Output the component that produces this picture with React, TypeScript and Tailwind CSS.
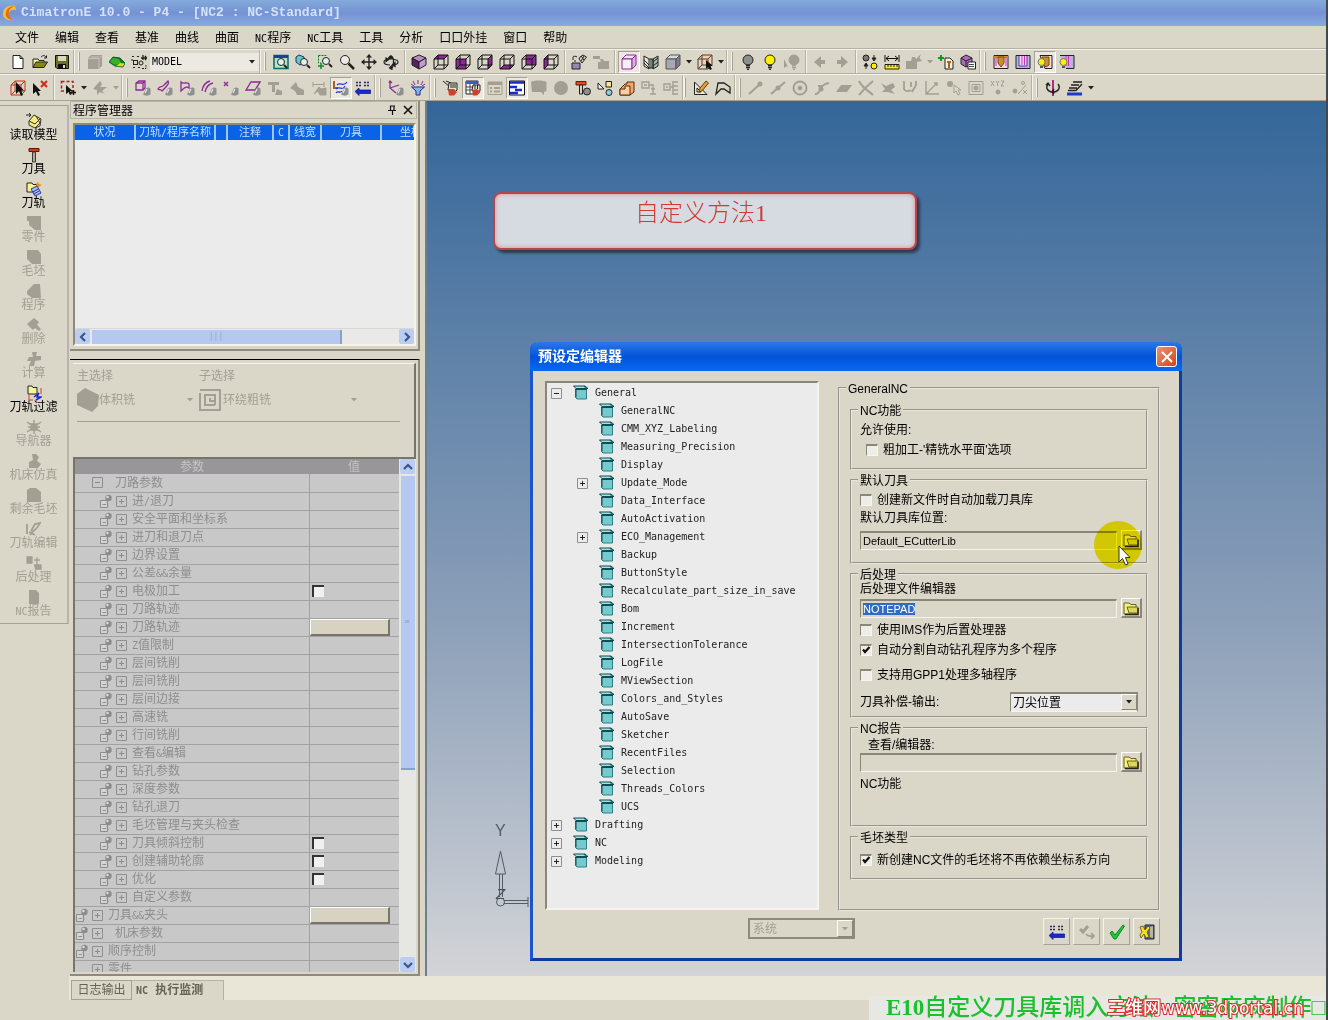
import { ReactNode, useEffect, useRef } from 'react';
import clsx from 'clsx';

const G = '#a39f92';
const P = '#8b2a96';

/** Latin runs are set in a narrow monospace next to the 12px Chinese glyphs */
function Mixed({ children }: { children: string }) {
  return (
    <>
      {children.split(/([A-Za-z&/]+)/).map((part, i) =>
        i % 2 ? (
          <span key={i} className="text-[10px]">
            {part}
          </span>
        ) : (
          part
        ),
      )}
    </>
  );
}

const FACES = {
  top: '1,5 5,1 15,1 11,5',
  front: '1,5 11,5 11,15 1,15',
  right: '11,5 15,1 15,11 11,15',
  bottom: '1,15 5,11 15,11 11,15',
  back: '5,1 15,1 15,11 5,11',
  left: '1,5 5,1 5,11 1,15',
};

function wireCube(face?: keyof typeof FACES, stroke = '#111', fill = P) {
  return (
    <>
      {face && <polygon points={FACES[face]} fill={fill} />}
      <path d="M1 5H11V15H1ZM5 1H15V11H5ZM1 5L5 1M11 5L15 1M11 15L15 11M1 15L5 11" stroke={stroke} fill="none" />
    </>
  );
}

function solidCube(a: string, b: string, c: string, stroke = '#333') {
  return (
    <g stroke={stroke} strokeLinejoin="round">
      <polygon points="1,5 5,1 15,1 11,5" fill={a} />
      <polygon points="1,5 11,5 11,15 1,15" fill={b} />
      <polygon points="11,5 15,1 15,11 11,15" fill={c} />
    </g>
  );
}

function lens(x = 9, y = 8) {
  return (
    <g fill="none" stroke="#222">
      <circle cx={x} cy={y} r="3.5" fill="#dff0ee" />
      <path d={`M${x + 3} ${y + 3}L${x + 6} ${y + 6}`} strokeWidth="2" />
    </g>
  );
}

function bulb(fill: string, stroke = '#222') {
  return (
    <g stroke={stroke}>
      <circle cx="8" cy="6" r="5" fill={fill} />
      <path d="M6 11.5H10M6 13.5H10M7 15.5H9" strokeWidth="1.5" />
    </g>
  );
}

// small grey cone that sits in the corner of the filter icons
const cone = (
  <>
    <path d="M8 14.500L11 8.500C12 7 15 7 15.500 9V14.500C13 16 10 16 8 14.500Z" fill="#8f8f8f" />
    <path d="M10 13L12 9" stroke="#e4e4e4" strokeWidth="1.200" />
  </>
);
const cursor = <path d="M6 2V14L9 11L11 16L13 15L11 10.500H14Z" fill="#111" />;

function filterIcon(shape: ReactNode) {
  return (
    <>
      <g fill="none" stroke={P} strokeWidth="1.300">
        {shape}
      </g>
      {cone}
    </>
  );
}

const ICONS: Record<string, ReactNode> = {
  new: <path d="M3 1.500H10L13 4.500V14.500H3ZM10 1.500V4.500H13" fill="#fff" stroke="#222" />,
  open: (
    <g stroke="#222">
      <path d="M1 13.500V5H6L7 6.500H12V8" fill="#f5f0a0" />
      <path d="M1 13.500L4 8H15.500L12 13.500Z" fill="#8a8418" />
      <path d="M9 3C11 1 13 1 14 3.500M14.500 1.500V4H12" fill="none" />
    </g>
  ),
  save: (
    <>
      <path d="M1.500 1.500H14.500V14.500H3L1.500 13Z" fill="#6e6e1e" stroke="#111" />
      <path d="M4 2H12V7H4Z" fill="#dad6c8" />
      <path d="M4 10H12V14H4Z" fill="#111" />
      <path d="M9 11H11V14H9Z" fill="#ddd" />
    </>
  ),
  grayBox: (
    <>
      <path d="M1 4L4 1H15V12L12 15H1Z" fill={G} />
      <path d="M1 4.500H12V15M12 4.500L15 1.500M4 3H12" fill="none" stroke="#c9c5b8" />
    </>
  ),
  greenGem: (
    <>
      <path d="M0 8L4 3L11 4L16 9L14 13L6 12Z" fill="#0c7a1e" stroke="#063" />
      <path d="M1 8L4 4L10 5L12 9L6 11Z" fill="#3cae28" />
      <path d="M11 9L15.500 9.500L14 12.500L7 12Z" fill="#e8d030" />
    </>
  ),
  nodes: (
    <g fill="none" stroke="#222">
      <path d="M1 2.500H4M6 2.500H8M1 5V7M2 13.500H5M7 13.500H9M11 14.500H15V11" strokeDasharray="2 1" />
      <rect x="2.500" y="6.500" width="4" height="4" />
      <circle cx="10" cy="9" r="2" />
      <path d="M12 1V6M10 4H15M14 2L15.500 4L14 6" strokeWidth="1.300" />
    </g>
  ),
  zoomWin: (
    <>
      <path d="M1 1.500H15V14.500H1Z" fill="#b7e2c4" stroke="#0a6a6a" strokeWidth="1.500" />
      <path d="M1 1H15V4H1Z" fill="#1c3f9c" />
      {lens(8, 8)}
    </>
  ),
  zoomCube: (
    <>
      <path d="M1 3L4 1L9 3V9L5 11L1 8Z" fill="#6ac8b4" stroke="#1c2f8c" />
      {lens(9, 8)}
    </>
  ),
  zoomPlus: (
    <>
      <path d="M1.500 1.500H9V3M1.500 1.500V9H4" fill="none" stroke="#0a7a2a" strokeDasharray="2 1" />
      <path d="M1 12H7M4 9V15" stroke="#0a8a2a" strokeWidth="1.500" />
      {lens(9, 7)}
    </>
  ),
  zoom: (
    <g stroke="#222" fill="none">
      <circle cx="6" cy="6" r="4.500" fill="#eceae2" />
      <path d="M9.500 9.500L15 15" strokeWidth="2.500" />
    </g>
  ),
  pan: (
    <g fill="#222">
      <path d="M7.300 3H8.700V13H7.300ZM3 7.300H13V8.700H3Z" />
      <path d="M8 0L11 3.500H5ZM8 16L11 12.500H5ZM0 8L3.500 5V11ZM16 8L12.500 5V11Z" />
    </g>
  ),
  rotate: (
    <g fill="none" stroke="#222" strokeWidth="1.200">
      <path d="M6 5.500C2 5.500 1 7 1 8C1 10 4 11 7 11M10 5.500C14 5.500 15 7 15 8C15 9 14 10.500 11 10.500" />
      <path d="M5.500 6C5.500 3 6.500 2 8 2C9.500 2 10.500 4 10.500 8C10.500 12 9.500 14 8 14" />
      <path d="M5 5L8 2L10 5ZM12 8.500L9.500 10.500L12 12.500ZM9 11.500L6.500 14L9 15.500ZM3 4L5.500 5.500L3 7.500Z" fill="#222" />
    </g>
  ),
  iso: (
    <g stroke="#222" strokeLinejoin="round">
      <polygon points="8,1 15,4 8,8 1,4" fill="#b98cc4" />
      <polygon points="1,4 8,8 8,15 1,11" fill="#5a1f66" />
      <polygon points="15,4 8,8 8,15 15,11" fill="#c69ad0" />
    </g>
  ),
  cubeTop: wireCube('top'),
  cubeFront: wireCube('front'),
  cubeRight: wireCube('right'),
  cubeBottom: wireCube('bottom'),
  cubeBack: wireCube('back'),
  cubeLeft: wireCube('left'),
  link: (
    <>
      <path d="M1 9H9V15H1Z" fill="#9a86b8" stroke="#222" />
      <path d="M2 3C2 2 5 2 6 3M2 3V6M3 7H5M9 3L12 1L15.500 3L11 9L8 5ZM10 2L13 6M13 2L10 7" fill="none" stroke="#222" />
    </>
  ),
  grayLink: <path d="M0 2H7V5H10L11 7H16V15H5V8H8L7 5H0Z" fill={G} />,
  shaded: solidCube('#f2e6f4', '#f6f0f6', '#d9b0e0', P),
  hatch: (
    <g stroke="#222">
      <path d="M1 2L6 5V15L1 12Z" fill="#dfe8e0" />
      <path d="M15 2L10 5V15L15 12Z" fill="#9dc4a8" />
      <path d="M1 6L6 11M1 9L6 14M10 8L15 4M10 12L15 8M6 5H10V14H6M8 5V14" fill="none" />
    </g>
  ),
  grayCube: solidCube('#d8d8de', '#a8a8b2', '#7c7c88', '#555'),
  cubeSel: (
    <>
      {wireCube('back', '#5a3a2a', '#f0cfae')}
      <path d="M9 6V15L11 13L13 16L15 15L13 12H16Z" fill="#111" />
    </>
  ),
  bulbGray: bulb('#8e8e8e'),
  bulbYellow: bulb('#fdf000'),
  bulbOff: (
    <>
      <g transform="translate(2 0)">{bulb(G, G)}</g>
      <path d="M0 5V14L3 12L5 15" fill={G} />
    </>
  ),
  left: <path d="M9 2V14L2 8ZM9 6H13V10H9Z" fill={G} />,
  right: <path d="M7 2V14L14 8ZM3 6H7V10H3Z" fill={G} />,
  swap: (
    <g stroke="#222">
      <circle cx="4" cy="4" r="3" fill="#777" />
      <circle cx="12" cy="12" r="3" fill="#fdf000" />
      <path d="M12 1V5M10 4L12 7L14 4ZM4 15V11M2 12L4 9L6 12Z" fill="#222" />
    </g>
  ),
  measure: (
    <>
      <path d="M1 1V8M15 1V8M2 4.500H14M5 2L2 4.500L5 7M11 2L14 4.500L11 7" stroke="#111" fill="none" />
      <path d="M1 10.500H15V15H1Z" fill="#fdf000" stroke="#222" />
      <path d="M4 11V13M7 11V13M10 11V13M13 11V13" stroke="#222" />
    </>
  ),
  grayStar: <path d="M0 7H5L6 3H9L10 5L15 0L13.500 4L16 7L11 8V15H0Z" fill={G} />,
  treePlus: (
    <>
      <path d="M7 4H12L15 7V15H7Z" fill="#f4f0dc" stroke="#222" />
      <path d="M0 4H6M3 1V7" stroke="#0a9a2a" strokeWidth="2" />
      <path d="M9 8H13M11 8V14" stroke="#b0601a" strokeWidth="2" />
    </>
  ),
  cubeList: (
    <>
      <polygon points="6,1 12,4 12,10 6,13 1,10 1,4" fill="#b06ac0" stroke="#222" />
      <path d="M1 4L6 7L12 4M6 7V13" stroke="#222" fill="none" />
      <path d="M8 8H15.500V15H8Z" fill="#fff" stroke="#222" />
      <path d="M9 10.500H14M9 12.500H14" stroke="#444" />
    </>
  ),
  nc1: (
    <>
      <path d="M1 1.500H15V14.500H1Z" fill="#f4d8e8" stroke="#222" />
      <path d="M1 3H15" stroke="#c8902a" strokeWidth="2" />
      <path d="M3 3V12M13 3V12" stroke="#d030b0" />
      <path d="M5 3H11V9L8 13L5 9Z" fill="#c8902a" stroke="#7a4a10" />
    </>
  ),
  nc2: (
    <>
      <path d="M1 1.500H15V14.500H1Z" fill="#b8b4e0" stroke="#222" />
      <path d="M4 2V12H12V2" fill="#f4d8f0" stroke="#4040b0" />
      <path d="M7 2V11M9.500 2V11" stroke="#d030b0" />
    </>
  ),
  nc3: (
    <>
      <path d="M3 1.500H15V14.500H8Z" fill="#f4d8e8" stroke="#222" />
      <path d="M5 3H12V11L9 13L6 10Z" fill="#c8902a" stroke="#7a4a10" />
      <circle cx="4.500" cy="8" r="3.500" fill="#fdf000" stroke="#777" />
      <path d="M3 13H6" stroke="#555" strokeWidth="2" />
    </>
  ),
  nc4: (
    <>
      <path d="M1 1.500H15V14.500H7" fill="#b8b4e0" stroke="#222" />
      <path d="M7 2V12M9.500 2V12" stroke="#d030b0" />
      <circle cx="4.500" cy="8" r="3.500" fill="#fdf000" stroke="#777" />
      <path d="M3 13H6" stroke="#555" strokeWidth="2" />
    </>
  ),
  selRed: (
    <>
      {wireCube(undefined, '#d42a1c')}
      {cursor}
    </>
  ),
  cursorX: (
    <>
      <path d="M1 3V14L4 11.500L6 16L8 15L6 11H9Z" fill="#111" />
      <path d="M9 1L15 7M15 1L9 7" stroke="#d42a1c" strokeWidth="2" />
    </>
  ),
  selDash: (
    <>
      <path d="M1.500 1.500H13V11H1.500Z" fill="none" stroke="#b0202a" strokeWidth="1.500" strokeDasharray="3 2" />
      <path d="M6 5V14L8.500 12L10 15L12 14L10 11H12.500Z" fill="#111" />
      <path d="M11 12.500H16M13.500 10V15" stroke="#111" strokeWidth="1.500" />
    </>
  ),
  grayHand: <path d="M1 9L8 1L10 4L8 7H15L10 11L13 14L8 12L5 15V10Z" fill={G} />,
  f1: filterIcon(<path d="M1 3L4 1H10V8L8 10H1ZM1 3H8V10M8 3L10 1" />),
  f2: filterIcon(<path d="M1 9C3 5 5 8 7 5L11 1C13 4 10 5 8 8L5 11C3 8 2 11 1 9Z" />),
  f3: filterIcon(<path d="M2 11V2C5 5 8 1 10 4V8C7 6 5 8 2 11Z" />),
  f4: filterIcon(<path d="M1 11C2 5 5 2 9 1M4 12C5 7 8 4 12 3" />),
  f5: filterIcon(<path d="M1 2L5 6M5 2L1 6" />),
  f6: filterIcon(<path d="M1 10L6 2H15L10 10Z" />),
  g7: <path d="M1 2H12V5H8V12H5V5H1ZM10 9L15 11V15H8Z" fill={G} />,
  g8: <path d="M1 8L7 2L9 7L15 10V15H8L6 11Z" fill={G} />,
  g9: <path d="M2 2V7M13 2V7M2 4.500H13M3 14L8 7L10 9L15 8V15H9L7 11Z" fill={G} stroke={G} />,
  path: (
    <>
      <path d="M1 1V8H5" stroke="#b0601a" strokeWidth="2" fill="none" />
      <path d="M4 5C8 1 10 8 14 2M3 9C7 5 9 12 12 6M3 13C5 10 7 14 9 11" fill="none" stroke="#2a3ad0" strokeWidth="1.300" />
      {cone}
    </>
  ),
  listBack: (
    <>
      <path d="M1 2.500H6M1 5.500H6M9 2.500H15M9 5.500H15" stroke="#2a2a6a" strokeWidth="1.500" strokeDasharray="2 1" />
      <path d="M0 11.500L4 8V10H15.500V13.500H4V15.500Z" fill="#1a2ad0" stroke="#0a1080" strokeWidth="0.700" />
    </>
  ),
  axis: filterIcon(<path d="M2 1V8L8 13M2 8L11 5M1 3L2 1L4 3" />),
  funnel: (
    <>
      <path d="M3 1L5 5M8 0V4M13 1L11 5M1 4L4 6M15 4L12 6" stroke={P} />
      <path d="M1.500 7H14.500L10 11V15H6V11Z" fill="#8ab0e8" stroke="#1c2f8c" />
    </>
  ),
  hand: (
    <>
      <path d="M0 1L7 7M3 1L8 3" stroke="#222" />
      <path d="M6 3H14V10L10 14L5 10Z" fill="#e8e0d4" stroke="#222" />
      <path d="M5 9L11 9L14 12L11 15.500H6Z" fill="#c8442a" />
      <path d="M8 4V8M10 4V8M12 4V8" stroke="#222" />
    </>
  ),
  gridHand: (
    <>
      <path d="M1 1H13V14H1Z" fill="#fff" stroke="#222" />
      <path d="M1 1H13V4H1Z" fill="#3a5ad0" />
      <path d="M1 7H13M1 10H13M5 4V14M9 4V14" stroke="#444" />
      <path d="M8 5H15V11L11 13L7 10Z" fill="#e8e0d4" stroke="#222" />
      <path d="M7 10L12 9L15.500 12L12 15.500H8Z" fill="#c8442a" />
      <path d="M10 5V9M12.500 5V9" stroke="#222" />
    </>
  ),
  grayList: (
    <g fill="none" stroke={G}>
      <path d="M1 2H15V14.500H1Z" />
      <path d="M1 3.500H15" strokeWidth="3" />
      <path d="M3 8H5M7 8H13M3 11.500H5M7 11.500H13" strokeWidth="2" />
    </g>
  ),
  blueList: (
    <>
      <path d="M0.500 1H15.500V15H0.500Z" fill="#fff" stroke="#111" />
      <path d="M1 2.500H15M1 7H8M6 10H13M1 13H9" stroke="#1a2ad0" strokeWidth="2.500" />
    </>
  ),
  speech: <path d="M0 2C3 0 12 0 15.500 2V11L13 12V15L10 12H1Z" fill={G} />,
  disc: <circle cx="8" cy="8" r="7" fill={G} />,
  tool: (
    <>
      <path d="M1 1.500H11V5H1Z" fill="#e0482a" stroke="#6a1a10" />
      <path d="M4.500 5H7.500V14H4.500Z" fill="#d8d4c4" stroke="#222" />
      <circle cx="12" cy="11.500" r="3.500" fill="#8e8e8e" stroke="#222" />
    </>
  ),
  shapes: (
    <g stroke="#222">
      <path d="M1 3L7 9H1Z" fill="#f4f0e0" />
      <path d="M9 1.500H14.500V7H9Z" fill="#f8e890" />
      <circle cx="12" cy="12.500" r="3" fill="#8ad0d8" />
    </g>
  ),
  block: (
    <g stroke="#5a2a10">
      <path d="M1 9L6 4H8V2H15V12L11 15H1Z" fill="#f4a868" />
      <path d="M1 9H6V6H11V15H1Z" fill="#f8cfa4" />
    </g>
  ),
  grayTree: <path d="M1 2H8V8H1ZM3 5H6M8 5H12V14M9 14H15M10 9H14" fill="none" stroke={G} strokeWidth="1.400" />,
  grayTree2: <path d="M1 4H7V10H1ZM3 7H5M7 7H10M10 1V15M10 2H15M10 6H15M10 10H15M10 14H15" fill="none" stroke={G} strokeWidth="1.400" />,
  pencil: (
    <>
      <path d="M1.500 2V14.500H14ZM4 8V12H8Z" fill="#e9e6d8" stroke="#222" />
      <path d="M6 12L7 8L13 1L15.500 3L9 11Z" fill="#e0a030" stroke="#6a3a10" />
    </>
  ),
  poly: <path d="M1 14L3 3H9L15 7V13L9 9L6 9Z" fill="none" stroke="#222" strokeWidth="1.300" />,
  d1: (
    <>
      <path d="M1 14L11 5" stroke={G} strokeWidth="2" />
      <circle cx="12" cy="4" r="2.500" fill={G} />
    </>
  ),
  d2: (
    <>
      <path d="M1 14L15 2" stroke={G} strokeWidth="2" />
      <circle cx="8" cy="8" r="2.500" fill={G} />
    </>
  ),
  d3: (
    <g stroke={G}>
      <circle cx="8" cy="8" r="6.500" fill="none" strokeWidth="2" />
      <circle cx="8" cy="8" r="2" fill={G} />
    </g>
  ),
  d4: (
    <>
      <path d="M1 14C8 15 4 4 15 3M4 6H8" fill="none" stroke={G} strokeWidth="2" />
      <circle cx="7" cy="9" r="2.500" fill={G} />
    </>
  ),
  d5: <path d="M0 12L5 5H16L11 12Z" fill={G} />,
  d6: <path d="M1 1C5 9 10 10 15 15M15 1C10 5 5 10 1 15" fill="none" stroke={G} strokeWidth="2" />,
  d7: <path d="M1 3L6 6L13 3L15 7L11 10L15 14L8 12L2 12L5 9Z" fill={G} />,
  d8: <path d="M2 1V9C4 14 8 9 9 11M9 2V7M14 1V5L10 12" fill="none" stroke={G} strokeWidth="1.800" />,
  d9: <path d="M2 1V14H15M2 14L13 3M10 3H13V6" fill="none" stroke={G} strokeWidth="1.400" />,
  d10: (
    <>
      <circle cx="4" cy="4" r="3" fill={G} />
      <path d="M8 5V13L10 11L12 15L14 14L12 10H15Z" fill="none" stroke={G} />
    </>
  ),
  d11: (
    <g stroke={G} fill="none">
      <path d="M1 1.500H15V14.500H1Z" />
      <path d="M4 4.500H12V11.500H4Z" />
      <circle cx="8" cy="8" r="2" fill={G} />
    </g>
  ),
  d12: (
    <g stroke={G} fill="none">
      <path d="M1 1L4 6M4 1L1 6M6 1L7.500 3.500L9 1M7.500 3.500V6M11 1H14L11 6H14" />
      <circle cx="8" cy="12" r="2" fill={G} />
    </g>
  ),
  d13: (
    <g stroke={G} fill="none">
      <circle cx="3" cy="11" r="2" fill={G} />
      <circle cx="11" cy="3" r="1.500" />
      <path d="M6 14L14 5M11 10L15 14M15 10L11 14" />
    </g>
  ),
  spin: (
    <>
      <path d="M8 0V16" stroke="#b02a8c" strokeWidth="2" />
      <path d="M3 4C0 8 3 12 8 12C13 12 16 8 13 4M1 5L3 3L5 6M9 9L7 12L9 14" fill="none" stroke="#222" strokeWidth="1.400" />
    </>
  ),
  layers: (
    <>
      <path d="M6 2H15M4 5H12M2 8H10M1 10.500H9L15 4" fill="none" stroke="#222" strokeWidth="1.300" />
      <path d="M0 12.500H15V15.500H0Z" fill="#1a3ad0" />
    </>
  ),
  // side bar
  load: (
    <>
      <path d="M3 8L8 2L15 6L14 13L9 15L3 12Z" fill="#f4ee7a" stroke="#333" />
      <path d="M10 3L14 10L9 15M3 8L9 11L14 6" stroke="#333" fill="none" />
      <path d="M0 2H4M3 0L5 2L3 4" stroke="#222" fill="none" />
    </>
  ),
  cutter: (
    <>
      <path d="M3 1.500H13V4.500H3Z" fill="#d83a1c" stroke="#5a1a10" />
      <path d="M6.500 5H9.500V15H6.500Z" fill="#b8a890" stroke="#3a3a3a" />
    </>
  ),
  toolpath: (
    <>
      <path d="M1 2H6L7 3.500H11V11H1Z" fill="#f8f49a" stroke="#222" />
      <path d="M5 8L11 5L15 12L9 15Z" fill="#a8b8f0" stroke="#223a9c" />
      <path d="M7 11L12 8M8 13L13 10" stroke="#223a9c" />
      <path d="M10 3L12 1L13 3L16 4L13 6L11 5Z" fill="#f0901a" />
    </>
  ),
  b1: <path d="M1 1H15V15H9L3 10V6H1Z" fill={G} />,
  b2: <path d="M1 1H12L15 5V15H6L1 10Z" fill={G} />,
  b3: <path d="M1 8L8 1H14L15 15H6L1 11Z" fill={G} />,
  b4: <path d="M1 7L8 1L13 5L11 8L15 12L13 14L9 11L7 13Z" fill={G} />,
  b5: <path d="M6 1H11L10 5H15V9L9 10L8 15H3L5 10H1L3 6H7Z" fill={G} />,
  filter: (
    <>
      <path d="M2 1H6L7 2.500H11V9H2Z" fill="#f8f49a" stroke="#222" />
      <path d="M3 10V15H7M15 3V9" stroke="#d83a1c" fill="none" />
      <path d="M8 12L13 8L11 12H15L10 15" stroke="#1a2ad0" strokeWidth="1.500" fill="none" />
    </>
  ),
  b6: <path d="M8 1V15M1 3L15 13M15 3L1 13M2 8H14M5 5H11V11H5Z" fill={G} stroke={G} strokeWidth="1.500" />,
  b7: <path d="M6 1H10L13 4L11 8L15 11L12 15H3V9L7 7Z" fill={G} />,
  b8: <path d="M1 3L4 1H10L15 5V15H1Z" fill={G} />,
  b9: <path d="M1 3V13M4 14C7 8 10 11 14 2L9 3L5 10M3 11L9 14" fill="none" stroke={G} strokeWidth="1.800" />,
  b10: <path d="M1 2H6V8H1ZM8 5H14M11 2V13M8 10H15V14H9" fill={G} stroke={G} strokeWidth="1.300" />,
  b11: <path d="M3 1H10L13 4V15H3Z" fill={G} />,
  book: (
    <g stroke="#0d4f55" strokeLinejoin="round">
      <path d="M2.500 5.500H13.500V15H4L2.500 13.500Z" fill="#74cacc" stroke="#2a8088" />
      <path d="M0.500 2H12L15 4.500H3Z" fill="#a4e2e4" />
      <path d="M3 4.500V13.500M11 2L13 4.500" />
      <path d="M2 5.500H14" />
    </g>
  ),
  folder: (
    <>
      <path d="M1 3H6L8 4.500H13V14H1Z" fill="#f4f08a" stroke="#6a6418" />
      <path d="M4 7H15V13H6Z" fill="#dcd65a" stroke="#6a6418" />
      <path d="M2 14.500H15V8" stroke="#222" strokeWidth="1.500" fill="none" />
    </>
  ),
  checkArrow: (
    <g stroke={G} fill="none">
      <path d="M1 5L4 8L9 2" strokeWidth="3" />
      <path d="M7 10C9 13 11 12 14 12M12 9L15 12L12 15" strokeWidth="1.600" />
    </g>
  ),
  check: <path d="M1 9L3 7L6 11L14 1L15.500 2L7 15H5Z" fill="#1ac832" stroke="#0a8a2a" />,
  exit: (
    <>
      <path d="M6 1H15V15H6Z" fill="#5a6a9c" stroke="#1a2040" />
      <path d="M11 3L14 2V14L11 13Z" fill="#b8b4a0" />
      <path d="M1 3L4 2L6 6L9 2L11 4L8 8L10 13L7 14L5 10L2 14L1 11L3 8Z" fill="#f8e020" stroke="#5a4a00" strokeWidth="0.800" />
    </>
  ),
};

function Icon({ name, className = 'size-4' }: { name: string; className?: string }) {
  return (
    <svg viewBox="0 0 16 16" className={clsx('shrink-0', className)} aria-hidden="true">
      {ICONS[name]}
    </svg>
  );
}

function Arrow({ color = '#222' }: { color?: string }) {
  return (
    <svg viewBox="0 0 6 4" className="w-[6px] h-[4px] shrink-0" aria-hidden="true">
      <path d="M0 0H6L3 3.500Z" fill={color} />
    </svg>
  );
}

// "|" wide grip, "!" narrow grip, "-" divider, "v" / "u" drop arrow (enabled / disabled), "*" suffix = pressed
const ROW_1A = 'new open save | grayBox greenGem nodes'.split(' ');
const ROW_1B =
  '| zoomWin zoomCube zoomPlus zoom pan rotate - iso cubeTop cubeFront cubeRight cubeBottom cubeBack cubeLeft - link grayLink - shaded* hatch grayCube v cubeSel v | bulbGray bulbYellow bulbOff - left right - swap measure grayStar u treePlus cubeList | nc1 nc2 nc3* nc4'.split(
    ' ',
  );
const ROW_2 =
  'selRed cursorX - selDash v grayHand u | f1 f2 f3 f4 f5 f6 g7 g8 g9 path* listBack | axis funnel | hand gridHand* grayList blueList* speech disc tool shapes block grayTree grayTree2 ! pencil poly | d1 d2 d3 d4 d5 d6 d7 d8 d9 d10 d11 d12 d13 | spin layers v'.split(
    ' ',
  );

function ToolItems({ items }: { items: string[] }) {
  return (
    <>
      {items.map((item, i) => {
        if (item === '|' || item === '!')
          return (
            <span
              key={i}
              className={clsx('h-full shrink-0 flex items-center justify-between pr-1', item === '|' ? 'w-[11px]' : 'w-[8px]')}
            >
              <span className="w-[2px] h-full bg-[#b5b1a3] border-r border-[#f5f3ea]" />
              <span className="w-[2px] h-[19px] bg-[#f5f3ea] border-r border-[#a5a193]" />
            </span>
          );
        if (item === '-')
          return (
            <span key={i} className="w-[6px] h-full shrink-0 flex justify-center">
              <span className="w-[2px] h-full bg-[#b5b1a3] border-r border-[#f5f3ea]" />
            </span>
          );
        if (item === 'v' || item === 'u')
          return (
            <button key={i} aria-label="More" className="w-[10px] h-[22px] shrink-0 flex items-center justify-center">
              <Arrow color={item === 'v' ? '#222' : G} />
            </button>
          );
        const pressed = item.endsWith('*');
        const name = pressed ? item.slice(0, -1) : item;
        return (
          <button
            key={i}
            aria-label={name}
            className={clsx(
              'w-[22px] h-[22px] shrink-0 flex items-center justify-center',
              pressed && 'bg-[#ece9e2] border border-t-[#a5a193] border-l-[#a5a193] border-b-white border-r-white',
            )}
          >
            <Icon name={name} />
          </button>
        );
      })}
    </>
  );
}

const MENU = ['文件', '编辑', '查看', '基准', '曲线', '曲面', 'NC程序', 'NC工具', '工具', '分析', '口口外挂', '窗口', '帮助'];

const SIDE: [string, string, boolean?][] = [
  ['load', '读取模型', true],
  ['cutter', '刀具', true],
  ['toolpath', '刀轨', true],
  ['b1', '零件'],
  ['b2', '毛坯'],
  ['b3', '程序'],
  ['b4', '删除'],
  ['b5', '计算'],
  ['filter', '刀轨过滤', true],
  ['b6', '导航器'],
  ['b7', '机床仿真'],
  ['b8', '剩余毛坯'],
  ['b9', '刀轨编辑'],
  ['b10', '后处理'],
  ['b11', 'NC报告'],
];

interface Param {
  name: string;
  level?: number;
  value?: 'check' | 'button';
}

const PARAMS: Param[] = [
  { name: '刀路参数', level: 0 },
  { name: '进/退刀' },
  { name: '安全平面和坐标系' },
  { name: '进刀和退刀点' },
  { name: '边界设置' },
  { name: '公差&&余量' },
  { name: '电极加工', value: 'check' },
  { name: '刀路轨迹' },
  { name: '刀路轨迹', value: 'button' },
  { name: 'Z值限制' },
  { name: '层间铣削' },
  { name: '层间铣削' },
  { name: '层间边接' },
  { name: '高速铣' },
  { name: '行间铣削' },
  { name: '查看&编辑' },
  { name: '钻孔参数' },
  { name: '深度参数' },
  { name: '钻孔退刀' },
  { name: '毛坯管理与夹头检查' },
  { name: '刀具倾斜控制', value: 'check' },
  { name: '创建辅助轮廓', value: 'check' },
  { name: '优化', value: 'check' },
  { name: '自定义参数' },
  { name: '刀具&&夹头', level: 1, value: 'button' },
  { name: '机床参数', level: 1 },
  { name: '顺序控制', level: 1 },
  { name: '零件', level: 3 },
];

const COLUMNS: [string, string][] = [
  ['状况', 'w-[60px]'],
  ['刀轨/程序名称', 'w-[80px]'],
  ['', 'w-[12px]'],
  ['注释', 'w-[46px]'],
  ['C', 'w-[16px]'],
  ['线宽', 'w-[32px]'],
  ['刀具', 'w-[60px]'],
  ['坐标', 'w-[60px]'],
];

const GENERAL = [
  'GeneralNC',
  'CMM_XYZ_Labeling',
  'Measuring_Precision',
  'Display',
  '+Update_Mode',
  'Data_Interface',
  'AutoActivation',
  '+ECO_Management',
  'Backup',
  'ButtonStyle',
  'Recalculate_part_size_in_save',
  'Bom',
  'Increment',
  'IntersectionTolerance',
  'LogFile',
  'MViewSection',
  'Colors_and_Styles',
  'AutoSave',
  'Sketcher',
  'RecentFiles',
  'Selection',
  'Threads_Colors',
  'UCS',
];

function Expander({ open, color = '#222' }: { open?: boolean; color?: string }) {
  return (
    <svg viewBox="0 0 11 11" className="size-[11px] shrink-0" aria-hidden="true">
      <path d="M0.500 0.500H10.500V10.500H0.500Z" fill="none" stroke="#8f8f8f" />
      <path d={open ? 'M3 5.500H8' : 'M3 5.500H8M5.500 3V8'} stroke={color} />
    </svg>
  );
}

function LockMark() {
  return (
    <svg viewBox="0 0 14 15" className="w-[14px] h-[15px] shrink-0" aria-hidden="true">
      <path d="M1.500 6.500H8.500V13.500H1.500ZM3.500 10.500H7" fill="#d4d4d4" stroke="#8c8c8c" />
      <circle cx="9.500" cy="4" r="3.200" fill="#8c8c8c" />
      <circle cx="8.500" cy="3" r="1.200" fill="#ddd" />
      <path d="M8 8L9 12" stroke="#8c8c8c" />
    </svg>
  );
}

function ScrollButton({ d, label }: { d: string; label: string }) {
  return (
    <button aria-label={label} className="size-[15px] shrink-0 rounded-xs bg-[#bccdf2] flex items-center justify-center">
      <svg viewBox="0 0 10 10" className="size-[10px]" aria-hidden="true">
        <path d={d} fill="none" stroke="#3a5488" strokeWidth="2.200" />
      </svg>
    </button>
  );
}

function SideBar() {
  return (
    <nav className="w-[69px] shrink-0 pt-[4px]">
      <ul className="border-t border-t-[#a5a193] border-r-2 border-r-[#b8b4a6] border-b border-b-[#a5a193] pt-[7px]">
        {SIDE.map(([icon, label, enabled], i) => (
          <li key={i} className="h-[34px]">
            <button className="w-full flex flex-col items-center">
              <Icon name={icon} />
              <span className={clsx('text-[12px] leading-[16px] -mt-0.5', enabled ? 'text-black' : 'text-[#a39f92]')}>
                <Mixed>{label}</Mixed>
              </span>
            </button>
          </li>
        ))}
      </ul>
    </nav>
  );
}

function ProgramManager() {
  return (
    <section className="border-r-2 border-b-2 border-[#8f8b7c] flex flex-col pb-[3px]">
      <header className="h-[18px] mr-[1px] pl-[2px] pr-[3px] flex items-center border border-[#b8b4a6] text-[12px] leading-[18px]">
        <h2 className="h-[16px]">程序管理器</h2>
        <button aria-label="Pin" className="ml-auto mr-[6px]">
          <svg viewBox="0 0 10 10" className="size-[10px]" aria-hidden="true">
            <path d="M3 1H8M3.500 1V5M7 1V5M1 5.500H9M5.500 6V10" fill="none" stroke="#111" strokeWidth="1.200" />
          </svg>
        </button>
        <button aria-label="Close">
          <svg viewBox="0 0 10 10" className="size-[10px]" aria-hidden="true">
            <path d="M1 1L9 9M9 1L1 9" stroke="#111" strokeWidth="1.600" />
          </svg>
        </button>
      </header>
      <div className="mt-[4px] ml-[3px] mr-[2px] h-[223px] flex flex-col bg-[#ebebeb] border-2 border-t-[#8f8b7c] border-l-[#8f8b7c] border-b-[#f5f3ea] border-r-[#f5f3ea]">
        <div className="flex-1 overflow-hidden">
          <table className="table-fixed w-[366px] border-collapse text-[11px] leading-[14px] text-[#bfe0ff]">
            <thead>
              <tr className="bg-[#0a62e6]">
                {COLUMNS.map(([name, width], i) => (
                  <th key={i} className={clsx('h-[15px] p-0 font-normal border-r-2 border-[#9cc8f8] whitespace-nowrap overflow-hidden', width)}>
                    <Mixed>{name}</Mixed>
                  </th>
                ))}
              </tr>
            </thead>
          </table>
        </div>
        <div className="h-[16px] flex items-center bg-[#e9eae8] border-t border-[#d8d8d4]">
          <ScrollButton label="Scroll left" d="M7 1L3 5L7 9" />
          <div className="ml-[2px] w-[250px] h-[14px] bg-[#b4c8f0] border-r-2 border-[#88a0cc] text-[8px] leading-[13px] text-center text-[#90a8d8]">
            |||
          </div>
          <div className="ml-auto flex">
            <ScrollButton label="Scroll right" d="M3 1L7 5L3 9" />
          </div>
        </div>
      </div>
    </section>
  );
}

function ParamRow({ name, level = 2, value }: Param) {
  const deep = level === 2;
  return (
    <tr className="border-b border-[#a2a2a2]">
      <td className="h-[18px] p-0 border-r border-[#a2a2a2]">
        <div className={clsx('h-[17px] flex items-center', deep ? 'pl-[24px]' : 'pl-0')}>
          {level === 1 || deep ? <LockMark /> : <span className="w-[14px]" />}
          <span className="w-[17px] pl-[3px] flex">
            <Expander open={level === 0} color="#8c8c8c" />
          </span>
          <span className={clsx('whitespace-nowrap leading-[16px]', level === 0 || name === '机床参数' ? 'pl-[9px]' : 'pl-[2px]')}>
            <Mixed>{name}</Mixed>
          </span>
        </div>
      </td>
      <td className="p-0">
        {value === 'check' && (
          <input
            type="checkbox"
            aria-label={name}
            className="appearance-none block ml-[2px] size-[12px] bg-[#f0f0f0] border-t-2 border-l-2 border-[#333]"
          />
        )}
        {value === 'button' && (
          <button
            aria-label={name}
            className="block w-[80px] h-[17px] bg-[#d6d3c3] border border-t-white border-l-white border-r-2 border-b-2 border-r-[#77746a] border-b-[#77746a]"
          />
        )}
      </td>
    </tr>
  );
}

function Parameters() {
  return (
    <section className="flex-1 min-h-0 mt-[8px] border-t border-t-black border-r-2 border-b-2 border-r-[#8f8b7c] border-b-[#8f8b7c] pl-[3px] pr-[2px] pt-[3px] pb-[2px] flex flex-col">
      <div className="h-[96px] shrink-0 border-t border-t-[#f5f3ea] border-r-2 border-b-2 border-[#77746a] px-[4px] pt-[4px] text-[12px] text-[#a39f92]">
        <div className="flex leading-[16px]">
          <span className="w-[122px]">主选择</span>
          <span>子选择</span>
        </div>
        <div className="mt-[4px] h-[24px] flex items-center">
          <button className="w-[116px] flex items-center">
            <svg viewBox="0 0 22 24" className="w-[22px] h-[24px]" aria-hidden="true">
              <polygon points="8,0 22,7 21,18 15,24 0,17 0,6" fill={G} />
            </svg>
            <span>体积铣</span>
            <span className="ml-auto">
              <Arrow color={G} />
            </span>
          </button>
          <button className="ml-[6px] w-[158px] flex items-center">
            <svg viewBox="0 0 22 22" className="size-[22px]" aria-hidden="true">
              <path d="M1 1H21V21H1V4M16 16H6V6H16V12H11V9M16 12V16" fill="none" stroke={G} strokeWidth="2" />
            </svg>
            <span className="pl-[2px]">环绕粗铣</span>
            <span className="ml-auto">
              <Arrow color={G} />
            </span>
          </button>
        </div>
        <hr className="mt-[9px] mr-[10px] border-t border-[#a5a193]" />
      </div>
      <div className="flex-1 min-h-0 flex border-l-2 border-[#77746a]">
        <div className="flex-1 min-w-0 overflow-hidden bg-[#c8c8c8]">
          <table className="table-fixed w-full border-collapse text-[12px] text-[#8e8e8e]">
            <thead>
              <tr className="bg-[#989698] text-[#c4c4c4] leading-[14px]">
                <th className="h-[15px] p-0 font-normal w-[234px]">参数</th>
                <th className="p-0 font-normal">值</th>
              </tr>
            </thead>
            <tbody>
              {PARAMS.map((p, i) => (
                <ParamRow key={i} {...p} />
              ))}
            </tbody>
          </table>
        </div>
        <div className="w-[17px] shrink-0 bg-[#e6e7e2] flex flex-col items-center">
          <ScrollButton label="Scroll up" d="M1 7L5 3L9 7" />
          <div className="mt-[2px] w-[14px] h-[294px] bg-[#b4c8f0] border-b-2 border-[#88a0cc] flex items-center justify-center text-[8px] text-[#90a8d8]">
            ≡
          </div>
          <div className="mt-auto flex">
            <ScrollButton label="Scroll down" d="M1 3L5 7L9 3" />
          </div>
        </div>
      </div>
    </section>
  );
}

function TreeItem({ name, child, open, branch }: { name: string; child?: boolean; open?: boolean; branch?: boolean }) {
  return (
    <li className={clsx('h-[18px] flex items-center', child ? 'pl-[30px]' : 'pl-[4px]')}>
      <span className="w-[22px] flex pt-[2px]">{branch && <Expander open={open} />}</span>
      <Icon name="book" />
      <span className="pl-[6px]">{name}</span>
    </li>
  );
}

function Check({ label, checked }: { label: string; checked?: boolean }) {
  return (
    <label className="h-[16px] flex items-center gap-[5px] leading-[16px] whitespace-nowrap">
      <span className="grid size-[12px] shrink-0">
        <input
          type="checkbox"
          defaultChecked={checked}
          className="peer appearance-none col-start-1 row-start-1 size-[12px] bg-[#efede8] border border-t-[#8a8678] border-l-[#8a8678] border-b-[#f7f5ee] border-r-[#f7f5ee] border-t-2"
        />
        <svg viewBox="0 0 12 12" className="hidden peer-checked:block col-start-1 row-start-1 size-[12px] pointer-events-none" aria-hidden="true">
          <path d="M3 5.500L5 8L9.500 3" fill="none" stroke="#111" strokeWidth="2.200" />
        </svg>
      </span>
      {label}
    </label>
  );
}

function Group({ title, className, children }: { title: string; className?: string; children: ReactNode }) {
  return (
    <fieldset className={clsx('min-w-0 border-2 [border-style:groove] border-[#e9e6da] pl-[8px] pr-[4px]', className)}>
      <legend className="h-[14px] leading-[16px] px-[2px] -ml-0.5">{title}</legend>
      {children}
    </fieldset>
  );
}

function PathField({ id, value, selected }: { id: string; value: string; selected?: boolean }) {
  const ref = useRef<HTMLInputElement>(null);

  useEffect(() => {
    if (selected) {
      ref.current?.focus();
      ref.current?.select();
    }
  }, [selected]);

  return (
    <div className="h-[20px] flex items-center gap-[4px]">
      <input
        ref={ref}
        id={id}
        defaultValue={value}
        className="flex-1 min-w-0 h-[19px] px-[2px] text-[11px] outline-none bg-transparent border border-t-2 border-t-[#8a8678] border-l-[#8a8678] border-b-[#f5f3ea] border-r-[#f5f3ea] selection:bg-[#316ac5] selection:text-white"
      />
      <button
        aria-label="Browse"
        className="w-[21px] h-[20px] flex items-center justify-center border border-t-white border-l-white border-r-2 border-b-2 border-r-[#8a8678] border-b-[#8a8678]"
      >
        <Icon name="folder" />
      </button>
    </div>
  );
}

function PreferenceDialog() {
  return (
    <div
      role="dialog"
      aria-label="预设定编辑器"
      className="absolute left-[103px] top-[241px] w-[652px] rounded-t-lg bg-[#dad6c8] border-x-3 border-b-3 border-l-[#1a55cc] border-r-[#0e3c9e] border-b-[#0e3c9e] text-[12px]"
    >
      <header className="-mx-[3px] h-[29px] rounded-t-lg pl-[8px] pr-[5px] flex items-center bg-linear-to-b from-[#2a78e8] via-[#0452d8] to-[#0868f4]">
        <h2 className="text-[14px] font-bold text-white">预设定编辑器</h2>
        <button
          aria-label="Close"
          className="ml-auto size-[21px] rounded-[3px] border border-white bg-linear-to-br from-[#ee9070] to-[#cc4418] flex items-center justify-center"
        >
          <svg viewBox="0 0 12 12" className="size-[12px]" aria-hidden="true">
            <path d="M1 1L11 11M11 1L1 11" stroke="#fff" strokeWidth="2" />
          </svg>
        </button>
      </header>

      <div className="flex gap-[19px] pl-[12px] pr-[19px] pt-[10px]">
        <ul className="w-[274px] h-[529px] bg-[#ebebeb] border-2 border-t-[#8a8678] border-l-[#8a8678] border-b-[#f5f3ea] border-r-[#f5f3ea] font-['DejaVu_Sans_Mono',monospace] text-[10px] text-[#222]">
          <TreeItem name="General" branch open />
          {GENERAL.map((name) => (
            <TreeItem key={name} child branch={name[0] === '+'} name={name.replace('+', '')} />
          ))}
          <TreeItem name="Drafting" branch />
          <TreeItem name="NC" branch />
          <TreeItem name="Modeling" branch />
        </ul>

        <fieldset className="flex-1 min-w-0 h-[530px] border-2 [border-style:groove] border-[#e9e6da] px-[10px] pt-[8px] font-['Liberation_Sans','Noto_Sans_CJK_SC',sans-serif]">
          <legend className="h-[14px] leading-[16px] px-[2px] -ml-1">GeneralNC</legend>
          <div className="flex flex-col gap-[3px]">
            <Group title="NC功能" className="pt-[5px] pb-[10px]">
              <p className="h-[14px] leading-[16px]">允许使用:</p>
              <div className="mt-[6px] pl-[6px]">
                <Check label="粗加工-'精铣水平面'选项" />
              </div>
            </Group>

            <Group title="默认刀具" className="pt-[5px] pb-[12px]">
              <Check label="创建新文件时自动加载刀具库" />
              <label htmlFor="lib" className="block mt-[2px] mb-[4px] h-[16px] leading-[16px]">
                默认刀具库位置:
              </label>
              <PathField id="lib" value="Default_ECutterLib" />
            </Group>

            <Group title="后处理" className="pb-[4px]">
              <label htmlFor="editor" className="block mb-[3px] h-[14px] leading-[16px]">
                后处理文件编辑器
              </label>
              <PathField id="editor" value="NOTEPAD" selected />
              <div className="mt-[4px] flex flex-col gap-[4px]">
                <Check label="使用IMS作为后置处理器" />
                <Check label="自动分割自动钻孔程序为多个程序" checked />
              </div>
              <div className="mt-[9px]">
                <Check label="支持用GPP1处理多轴程序" />
              </div>
              <div className="mt-[9px] pr-[4px] flex items-center justify-between">
                <label htmlFor="comp">刀具补偿-输出:</label>
                <div className="relative w-[128px] h-[20px]">
                  <select
                    id="comp"
                    className="appearance-none block w-full h-full px-[2px] bg-[#ebebeb] border border-t-2 border-t-[#8a8678] border-l-[#8a8678] border-b-[#f5f3ea] border-r-[#8a8678]"
                  >
                    <option>刀尖位置</option>
                  </select>
                  <span className="absolute right-[1px] inset-y-[2px] w-[16px] pointer-events-none flex items-center justify-center bg-[#dad6c8] border border-t-white border-l-white border-r-[#8a8678] border-b-[#8a8678]">
                    <Arrow />
                  </span>
                </div>
              </div>
            </Group>

            <Group title="NC报告" className="pt-[2px] pb-[35px]">
              <label htmlFor="report" className="block pl-[8px] mb-[1px] h-[14px] leading-[16px]">
                查看/编辑器:
              </label>
              <PathField id="report" value="" />
              <p className="mt-[4px] h-[14px] leading-[16px]">NC功能</p>
            </Group>

            <Group title="毛坯类型" className="pt-[8px] pb-[10px]">
              <Check label="新创建NC文件的毛坯将不再依赖坐标系方向" checked />
            </Group>
          </div>
        </fieldset>
      </div>

      <footer className="mt-[7px] pb-[13px] pl-[215px] pr-[19px] flex items-start">
        <div className="relative w-[107px] h-[21px]">
          <select
            disabled
            aria-label="级别"
            className="appearance-none block w-full h-full px-[3px] text-[#a39f92] bg-transparent border-2 border-[#8f8b7c]"
          >
            <option>系统</option>
          </select>
          <span className="absolute right-[2px] inset-y-[2px] w-[16px] pointer-events-none flex items-center justify-center bg-[#dad6c8] border border-t-white border-l-white border-r-[#8a8678] border-b-[#8a8678]">
            <Arrow color={G} />
          </span>
        </div>
        <div className="ml-auto flex gap-[3px]">
          {['listBack', 'checkArrow', 'check', 'exit'].map((icon) => (
            <button
              key={icon}
              aria-label={icon}
              className="size-[27px] flex items-center justify-center border border-t-[#f5f3ea] border-l-[#f5f3ea] border-b-[#a5a193] border-r-[#a5a193]"
            >
              <Icon name={icon} />
            </button>
          ))}
        </div>
      </footer>

      {/* click highlight and pointer */}
      <span className="absolute left-[561px] top-[179px] size-[48px] rounded-full bg-[#f6ee04] mix-blend-multiply pointer-events-none" />
      <svg viewBox="0 0 13 21" className="absolute left-[585px] top-[203px] w-[13px] h-[21px] pointer-events-none" aria-hidden="true">
        <path d="M1 1V17L4.500 13.500L7.500 20L10 19L7.500 12.500H12Z" fill="#fff" stroke="#333" />
      </svg>
    </div>
  );
}

function Viewport() {
  return (
    <main className="relative flex-1 min-w-0 overflow-hidden border-l-2 border-[#6f7f8c] bg-linear-to-b from-[#336699] from-0% via-[#8da0b9] via-60% to-[#d3d4d7] to-100%">
      <div className="absolute left-[66px] top-[91px] w-[424px] h-[58px] rounded-lg bg-[#d6dae1] border-2 border-[#b8454e] shadow-[inset_0_0_4px_#e08088,3px_3px_3px_#2b3c50] pt-[3px] pr-[8px] text-center text-[24px] leading-[32px] font-light text-[#d23a34] font-['Liberation_Serif','Noto_Sans_CJK_SC',serif]">
        自定义方法1
      </div>
      <svg viewBox="0 0 44 90" className="absolute left-[63px] top-[718px] w-[44px] h-[90px]" fill="none" stroke="#555c66" aria-hidden="true">
        <text x="5" y="17" fontSize="16" fill="#555c66" stroke="none" fontFamily="Liberation Sans">
          Y
        </text>
        <text x="6" y="80" fontSize="15" fill="#444a52" stroke="none" fontFamily="Liberation Sans" fontStyle="italic">
          Z
        </text>
        <path d="M10.500 32L5.500 55H15.500ZM9.500 55V78M12.500 55V78M14 81.500H38M14 84.500H38M38 78V88" />
        <circle cx="10.500" cy="83" r="4" />
      </svg>
      <PreferenceDialog />
    </main>
  );
}

export default function App() {
  return (
    <div className="h-screen flex flex-col overflow-hidden bg-[#dad6c8] text-black border-r-2 border-[#44484c] font-['DejaVu_Sans_Mono','Noto_Sans_CJK_SC',sans-serif]">
      <header className="h-[26px] shrink-0 flex items-center gap-[3px] pl-[2px] bg-linear-to-b from-[#84aadb] via-[#7592d4] to-[#88abe0]">
        <svg viewBox="0 0 16 16" className="size-[16px]" aria-hidden="true">
          <path d="M13 1C5 -1 0 5 1 10C2 14 6 16 12 15C8 13 6 11 7 8C8 5 10 4 14 5Z" fill="#f0c030" />
          <path d="M13 1C9 2 6 5 7 10C8 13 10 14 12 15C5 15 3 11 4 7C5 3 9 1 13 1Z" fill="#e06a1c" />
        </svg>
        <h1 className="text-[13px] font-bold text-[#d4e2f8] whitespace-pre font-['Liberation_Mono',monospace]">
          CimatronE 10.0 - P4 - [NC2 : NC-Standard]
        </h1>
      </header>

      <nav className="h-[23px] shrink-0 flex items-center gap-[16px] pl-[15px] text-[12px] border-b border-[#b5b1a3]">
        {MENU.map((item) => (
          <button key={item} className="h-[16px] leading-[18px] whitespace-nowrap">
            <Mixed>{item}</Mixed>
          </button>
        ))}
      </nav>

      <div className="h-[25px] shrink-0 flex items-center pl-[7px] border-t border-t-[#f5f3ea] border-b border-b-[#b5b1a3]">
        <ToolItems items={ROW_1A} />
        <div className="relative w-[109px] h-[18px] shrink-0">
          <select aria-label="Coordinate system" className="appearance-none block w-full h-full pl-[2px] bg-[#ebe9e2] text-[10px]">
            <option>MODEL</option>
          </select>
          <span className="absolute right-[4px] inset-y-0 flex items-center pointer-events-none">
            <Arrow />
          </span>
        </div>
        <ToolItems items={ROW_1B} />
      </div>
      <div className="h-[27px] shrink-0 flex items-center pl-[7px] border-t border-t-[#f5f3ea] border-b border-b-[#a5a193]">
        <ToolItems items={ROW_2} />
      </div>

      <div className="flex-1 min-h-0 flex">
        <SideBar />
        <div className="w-[356px] shrink-0 pl-[1px] pr-[5px] flex flex-col">
          <ProgramManager />
          <Parameters />
        </div>
        <Viewport />
      </div>

      <div className="h-[24px] shrink-0 flex">
        <div className="w-[69px] shrink-0" />
        <div role="tablist" className="flex-1 flex items-end bg-[#e9e6d8] pl-[2px] text-[12px] leading-[18px] text-[#666256]">
          <button role="tab" className="w-[61px] h-[20px] bg-[#dad6c8] border border-[#a5a193]">
            日志输出
          </button>
          <button role="tab" className="w-[92px] h-[20px] bg-[#dad6c8] border border-l-0 border-b-0 border-[#b5b1a3] font-bold whitespace-pre text-left pl-[4px]">
            <Mixed>NC 执行监测</Mixed>
          </button>
        </div>
      </div>

      <footer className="h-[20px] shrink-0 flex justify-end">
        <div className="relative w-[457px] h-[24px] -mt-1 bg-[#e7e7e3] pl-[17px] whitespace-nowrap text-[23px] leading-[24px] font-medium text-[#1cc02c] font-['Liberation_Serif','Noto_Sans_CJK_SC',serif]">
          <b>E10</b>自定义刀具库调入方法 - 密密麻麻制作□
          <span className="absolute left-[238px] top-0 text-[18px] leading-[24px] text-white font-medium [-webkit-text-stroke:2px_#d82a2a] [paint-order:stroke_fill] font-['DejaVu_Sans','Noto_Sans_CJK_SC',sans-serif]">
            三维网<span className="text-[17px]">www.3dportal.cn</span>
          </span>
        </div>
      </footer>
    </div>
  );
}
